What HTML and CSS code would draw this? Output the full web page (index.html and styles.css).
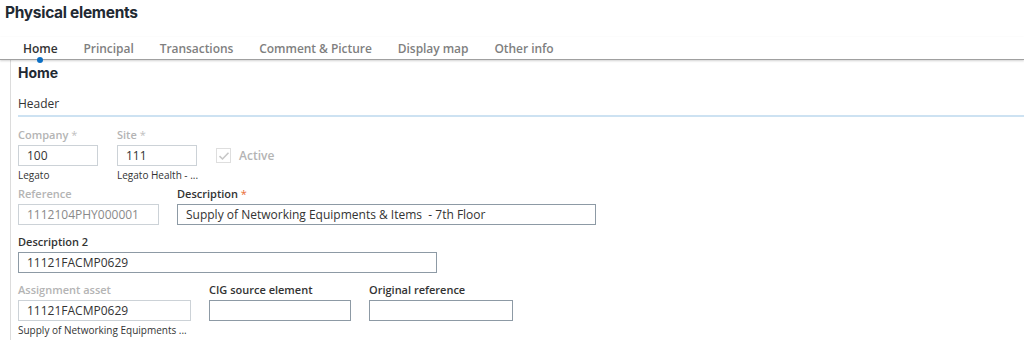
FILE: index.html
```html
<!DOCTYPE html>
<html>
<head>
<meta charset="utf-8">
<link rel="stylesheet" href="styles.css">
</head>
<body>
<div class="page">
  <h1 class="title">Physical elements</h1>
  <nav class="tabs">
    <span class="tab active">Home</span>
    <span class="tab">Principal</span>
    <span class="tab">Transactions</span>
    <span class="tab">Comment &amp; Picture</span>
    <span class="tab">Display map</span>
    <span class="tab">Other info</span>
  </nav>
  <div class="content">
    <h2 class="section">Home</h2>
    <div class="block-title">Header</div>
    <div class="row row1">
      <div class="field w80">
        <label class="lbl disabled">Company <span class="star">*</span></label>
        <div class="input">100</div>
        <div class="hint">Legato</div>
      </div>
      <div class="field w80">
        <label class="lbl disabled">Site <span class="star">*</span></label>
        <div class="input">111</div>
        <div class="hint">Legato Health - ...</div>
      </div>
      <div class="check">
        <span class="box"><svg width="12" height="10" viewBox="0 0 12 10"><path d="M1.5 5.2 L4.5 8 L10.5 1.8" fill="none" stroke="#c7c7c7" stroke-width="1.6"/></svg></span>
        <span class="check-lbl">Active</span>
      </div>
    </div>
    <div class="row after-hint">
      <div class="field w141">
        <label class="lbl disabled">Reference</label>
        <div class="input ro">1112104PHY000001</div>
      </div>
      <div class="field w419">
        <label class="lbl">Description <span class="star req">*</span></label>
        <div class="input dark">Supply of Networking Equipments &amp; Items&nbsp; - 7th Floor</div>
      </div>
    </div>
    <div class="row spaced">
      <div class="field w419">
        <label class="lbl">Description 2</label>
        <div class="input dark">11121FACMP0629</div>
      </div>
    </div>
    <div class="row spaced">
      <div class="field w173">
        <label class="lbl disabled">Assignment asset</label>
        <div class="input">11121FACMP0629</div>
        <div class="hint">Supply of Networking Equipments ...</div>
      </div>
      <div class="field w142">
        <label class="lbl">CIG source element</label>
        <div class="input dark"></div>
      </div>
      <div class="field w144">
        <label class="lbl">Original reference</label>
        <div class="input dark"></div>
      </div>
    </div>
  </div>
</div>
</body>
</html>
```

FILE: styles.css
```css
* { box-sizing: border-box; }
html, body { margin: 0; padding: 0; background: #fff; }
body { font-family: "Open Sans", "Liberation Sans", sans-serif; color: #333; overflow: hidden; }
.page { width: 1024px; height: 340px; }
.title {
  margin: 0;
  padding: 3px 0 0 5px;
  height: 37px;
  font-family: Inter, "Liberation Sans", sans-serif;
  font-size: 15.5px;
  font-weight: 700;
  color: #1f2a33;
  letter-spacing: -0.3px;
}
.tabs {
  display: flex;
  gap: 26px;
  padding-left: 23px;
  height: 23px;
  border-bottom: 1px solid #a0a0a0;
  box-shadow: 0 1px 2px rgba(0,0,0,0.18);
  position: relative;
}
.tab {
  font-size: 12px;
  font-weight: 600;
  color: #7f7f7f;
  line-height: 17px;
  padding-top: 3px;
  position: relative;
  letter-spacing: -0.05px;
}
.tab.active { color: #333; }
.tab.active::after {
  content: "";
  position: absolute;
  left: 50%;
  bottom: -4px;
  width: 6px;
  height: 6px;
  margin-left: -3px;
  border-radius: 50%;
  background: #0b6fc4;
}
.content {
  margin-left: 10px;
  border-left: 1px solid #dcdcdc;
  padding-left: 7px;
  height: 280px;
}
.section {
  margin: 0;
  padding-top: 4px;
  font-family: Inter, "Liberation Sans", sans-serif;
  font-size: 14px;
  font-weight: 700;
  color: #1f2a33;
  line-height: 18px;
}
.block-title {
  margin-top: 13px;
  font-size: 12px;
  color: #333;
  line-height: 17px;
  padding-bottom: 3px;
  border-bottom: 2px solid #cde2f2;
}
.row { display: flex; gap: 18px; align-items: flex-start; }
.row1 { margin-top: 9px; gap: 19px; }
.after-hint { margin-top: 3px; }
.spaced { margin-top: 8px; }
.field { display: flex; flex-direction: column; }
.w80 { width: 80px; }
.w141 { width: 141px; }
.w142 { width: 142px; }
.w144 { width: 144px; }
.w173 { width: 173px; }
.w419 { width: 419px; }
.lbl {
  font-size: 11px;
  font-weight: 600;
  color: #333;
  line-height: 15px;
  height: 17px;
  padding-top: 1px;
}
.lbl.disabled { color: #b4b4b4; }
.star { color: #c0c0c0; font-weight: 400; }
.star.req { color: #e96a33; }
.input {
  margin-top: 2px;
  height: 21px;
  border: 1px solid #ccd2d7;
  font-size: 12px;
  line-height: 19px;
  padding-left: 8px;
  color: #333;
  white-space: nowrap;
  overflow: hidden;
}
.input.dark { border-color: #8d9aa5; }
.input.ro { color: #8a8a8a; }
.hint {
  font-size: 10px;
  line-height: 14px;
  color: #333;
  margin-top: 2px;
  white-space: nowrap;
}
.check {
  display: flex;
  align-items: center;
  gap: 8px;
  margin-top: 19px;
  height: 21px;
}
.box {
  width: 15px;
  height: 15px;
  border: 1px solid #dedede;
  display: flex;
  align-items: center;
  justify-content: center;
}
.check-lbl { font-size: 12px; font-weight: 600; color: #b4b4b4; }
```
